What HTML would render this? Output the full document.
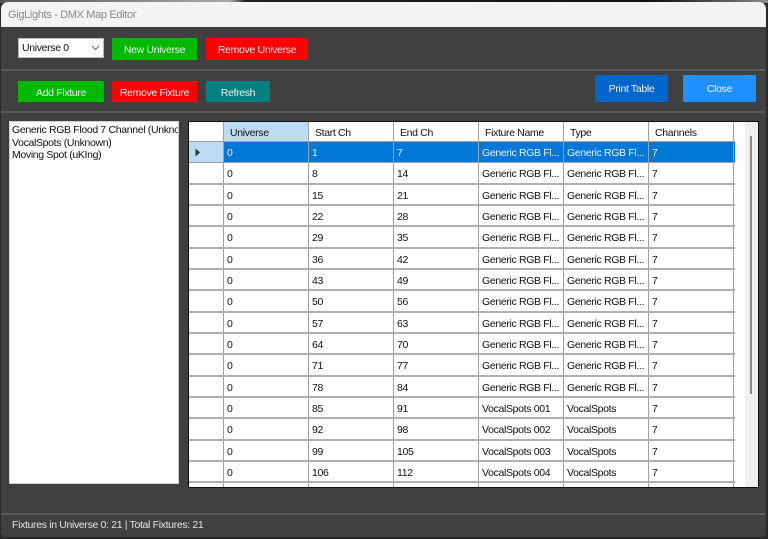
<!DOCTYPE html>
<html><head><meta charset="utf-8"><style>
*{box-sizing:border-box}
html,body{margin:0;padding:0;width:768px;height:539px;overflow:hidden;background:#2a2a2a}
body{position:relative;font-family:"Liberation Sans",sans-serif;font-size:10.5px;color:#111;letter-spacing:-.34px}
.a{position:absolute}
.top{left:0;top:0;width:768px;height:3px;background:linear-gradient(90deg,#555 0,#aaa 30%,#222 32%,#111 85%,#888 100%)}
.win{left:1px;top:2px;width:765px;height:535px;background:#404040;border-radius:7px 7px 4px 4px;overflow:hidden}
.title{left:8px;top:9px;color:#8a8a8a;font-size:11px}
.bar{left:1px;top:2px;width:765px;height:25px;background:#f3f3f3;border-radius:7px 7px 0 0}
.ln{left:1px;width:765px;height:2px;background:#595959}
.b{position:absolute;color:#f2f2f2;text-align:center;display:flex;align-items:center;justify-content:center;font-size:10.5px}
.p{padding-top:2px}
.g{background:#00b900}.r{background:#ff0000}
.list{left:9px;top:121px;width:170px;height:363px;background:#fff;border:1px solid #cfcfcf;padding:2px 2px;line-height:12.7px;overflow:hidden;white-space:nowrap;font-size:10.5px}
.grid{left:188px;top:121px;width:571px;height:367px;background:#fff;border:1px solid #111;overflow:hidden}
.c{position:absolute;top:0;height:100%;white-space:nowrap;overflow:hidden;padding-left:3px;border-right:1px solid #a0a0a0}
.row{position:absolute;left:0;width:546px;height:21.33px;border-bottom:2px solid #b0b0b0;line-height:22px}
.row .c:nth-child(1){left:0;width:35px;padding:0}
.row .c:nth-child(2){left:35px;width:85px}
.row .c:nth-child(3){left:120px;width:85px}
.row .c:nth-child(4){left:205px;width:85px}
.row .c:nth-child(5){left:290px;width:85px}
.row .c:nth-child(6){left:375px;width:85px}
.row .c:nth-child(7){left:460px;width:85px}
.hd{top:0;height:19px;border-bottom:0;line-height:22px}
.hd .c{padding-left:6px;border-right:1px solid #a0a0a0}
.sel{background:#0078d7;color:#f0f0f0;border-bottom:1px solid #a0a0a0}
.sel .c:nth-child(1){background:#bcdcf4}
.st{left:12px;top:519px;color:#e4e4e4;font-size:10.5px}
</style></head><body>
<div class="a top"></div>
<div class="a win"></div>
<div class="a bar"></div>
<div class="a title">GigLights - DMX Map Editor</div>

<div class="a" style="left:18px;top:38px;width:86px;height:20px;background:#fff;border:1px solid #bbb;padding-left:3px;line-height:18px;font-size:10.5px">Universe 0
<svg class="a" style="left:72px;top:6px" width="9" height="6" viewBox="0 0 9 6"><path d="M1 1L4.5 4.5L8 1" fill="none" stroke="#666" stroke-width="1"/></svg></div>
<div class="b g p" style="left:112px;top:38px;width:85px;height:22px">New Universe</div>
<div class="b r p" style="left:206px;top:38px;width:102px;height:22px">Remove Universe</div>
<div class="a ln" style="top:69px"></div>

<div class="b g p" style="left:18px;top:81px;width:86px;height:21px">Add Fixture</div>
<div class="b r p" style="left:112px;top:81px;width:85px;height:21px">Remove Fixture</div>
<div class="b p" style="left:206px;top:81px;width:64px;height:21px;background:#008080">Refresh</div>
<div class="b" style="left:595px;top:75px;width:73px;height:27px;background:#0066cc">Print Table</div>
<div class="b" style="left:683px;top:75px;width:73px;height:27px;background:#1e90ff">Close</div>
<div class="a ln" style="top:111px"></div>

<div class="a list">Generic RGB Flood 7 Channel (Unknown)<br>VocalSpots (Unknown)<br>Moving Spot (uKIng)</div>

<div class="a grid">
<div class="row hd"><div class="c"></div><div class="c" style="background:#bcdcf4">Universe</div><div class="c">Start Ch</div><div class="c">End Ch</div><div class="c">Fixture Name</div><div class="c">Type</div><div class="c">Channels</div></div>
<div class="a" style="left:0;top:19px;width:546px;height:1px;background:#a0a0a0"></div>
<div class="row sel" style="top:20px"><div class="c"><svg class="a" style="left:6px;top:6px" width="6" height="9" viewBox="0 0 6 9"><path d="M0.5 0.5L5 4.5L0.5 8.5Z" fill="#333"/></svg></div><div class="c">0</div><div class="c">1</div><div class="c">7</div><div class="c">Generic RGB Fl...</div><div class="c">Generic RGB Fl...</div><div class="c">7</div></div>
<div class="row" style="top:41.3px"><div class="c"></div><div class="c">0</div><div class="c">8</div><div class="c">14</div><div class="c">Generic RGB Fl...</div><div class="c">Generic RGB Fl...</div><div class="c">7</div></div>
<div class="row" style="top:62.7px"><div class="c"></div><div class="c">0</div><div class="c">15</div><div class="c">21</div><div class="c">Generic RGB Fl...</div><div class="c">Generic RGB Fl...</div><div class="c">7</div></div>
<div class="row" style="top:84px"><div class="c"></div><div class="c">0</div><div class="c">22</div><div class="c">28</div><div class="c">Generic RGB Fl...</div><div class="c">Generic RGB Fl...</div><div class="c">7</div></div>
<div class="row" style="top:105.3px"><div class="c"></div><div class="c">0</div><div class="c">29</div><div class="c">35</div><div class="c">Generic RGB Fl...</div><div class="c">Generic RGB Fl...</div><div class="c">7</div></div>
<div class="row" style="top:126.7px"><div class="c"></div><div class="c">0</div><div class="c">36</div><div class="c">42</div><div class="c">Generic RGB Fl...</div><div class="c">Generic RGB Fl...</div><div class="c">7</div></div>
<div class="row" style="top:148px"><div class="c"></div><div class="c">0</div><div class="c">43</div><div class="c">49</div><div class="c">Generic RGB Fl...</div><div class="c">Generic RGB Fl...</div><div class="c">7</div></div>
<div class="row" style="top:169.3px"><div class="c"></div><div class="c">0</div><div class="c">50</div><div class="c">56</div><div class="c">Generic RGB Fl...</div><div class="c">Generic RGB Fl...</div><div class="c">7</div></div>
<div class="row" style="top:190.7px"><div class="c"></div><div class="c">0</div><div class="c">57</div><div class="c">63</div><div class="c">Generic RGB Fl...</div><div class="c">Generic RGB Fl...</div><div class="c">7</div></div>
<div class="row" style="top:212px"><div class="c"></div><div class="c">0</div><div class="c">64</div><div class="c">70</div><div class="c">Generic RGB Fl...</div><div class="c">Generic RGB Fl...</div><div class="c">7</div></div>
<div class="row" style="top:233.3px"><div class="c"></div><div class="c">0</div><div class="c">71</div><div class="c">77</div><div class="c">Generic RGB Fl...</div><div class="c">Generic RGB Fl...</div><div class="c">7</div></div>
<div class="row" style="top:254.7px"><div class="c"></div><div class="c">0</div><div class="c">78</div><div class="c">84</div><div class="c">Generic RGB Fl...</div><div class="c">Generic RGB Fl...</div><div class="c">7</div></div>
<div class="row" style="top:276px"><div class="c"></div><div class="c">0</div><div class="c">85</div><div class="c">91</div><div class="c">VocalSpots 001</div><div class="c">VocalSpots</div><div class="c">7</div></div>
<div class="row" style="top:297.3px"><div class="c"></div><div class="c">0</div><div class="c">92</div><div class="c">98</div><div class="c">VocalSpots 002</div><div class="c">VocalSpots</div><div class="c">7</div></div>
<div class="row" style="top:318.7px"><div class="c"></div><div class="c">0</div><div class="c">99</div><div class="c">105</div><div class="c">VocalSpots 003</div><div class="c">VocalSpots</div><div class="c">7</div></div>
<div class="row" style="top:340px"><div class="c"></div><div class="c">0</div><div class="c">106</div><div class="c">112</div><div class="c">VocalSpots 004</div><div class="c">VocalSpots</div><div class="c">7</div></div>
<div class="row" style="top:361.3px"><div class="c"></div><div class="c"></div><div class="c"></div><div class="c"></div><div class="c"></div><div class="c"></div><div class="c"></div></div>
<div class="a" style="left:556px;top:0;width:13px;height:365px;background:#efefef"></div>
<div class="a" style="left:561px;top:14px;width:2px;height:258px;background:#8a8a8a"></div>
</div>

<div class="a ln" style="top:513px"></div>
<div class="a st">Fixtures in Universe 0: 21 | Total Fixtures: 21</div>
</body></html>
